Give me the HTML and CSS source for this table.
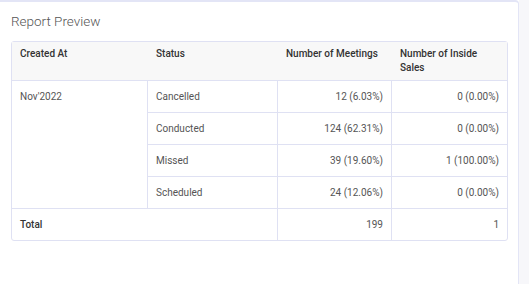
FILE: index.html
```html
<!DOCTYPE html>
<html>
<head>
<meta charset="utf-8">
<link rel="stylesheet" href="styles.css">
</head>
<body>
<div class="page">
  <div class="card">
    <h2 class="title">Report Preview</h2>
    <table class="report">
      <colgroup>
        <col class="c1"><col class="c2"><col class="c3"><col class="c4">
      </colgroup>
      <thead>
        <tr>
          <th>Created At</th>
          <th>Status</th>
          <th>Number of Meetings</th>
          <th class="last">Number of Inside Sales</th>
        </tr>
      </thead>
      <tbody>
        <tr>
          <td rowspan="4" class="date">Nov'2022</td>
          <td>Cancelled</td>
          <td class="num">12 (6.03%)</td>
          <td class="num last">0 (0.00%)</td>
        </tr>
        <tr>
          <td>Conducted</td>
          <td class="num">124 (62.31%)</td>
          <td class="num last">0 (0.00%)</td>
        </tr>
        <tr>
          <td>Missed</td>
          <td class="num">39 (19.60%)</td>
          <td class="num last">1 (100.00%)</td>
        </tr>
        <tr>
          <td>Scheduled</td>
          <td class="num">24 (12.06%)</td>
          <td class="num last">0 (0.00%)</td>
        </tr>
        <tr class="total">
          <td colspan="2" class="total-label">Total</td>
          <td class="num">199</td>
          <td class="num last">1</td>
        </tr>
      </tbody>
    </table>
  </div>
  <div class="strip"></div>
</div>
</body>
</html>
```
FILE: styles.css
```css
html, body {
  margin: 0;
  padding: 0;
  background: #ffffff;
  font-family: Roboto, "Liberation Sans", Arial, sans-serif;
}
.page {
  display: flex;
  height: 284px;
}
.card {
  width: 519px;
  box-sizing: border-box;
  border-top: 2px solid #e3e5f6;
  border-right: 1px solid #e3e5f6;
  border-top-right-radius: 4px;
  padding: 0 0 0 11px;
  background: #fff;
}
.strip {
  flex: 1;
  background: #f7f7fa;
}
.title {
  margin: 10px 0 11px 0;
  font-size: 13.5px;
  line-height: 18px;
  font-weight: 300;
  color: #555;
}
.report {
  border-collapse: separate;
  border-spacing: 0;
  table-layout: fixed;
  width: 495px;
  border: 1px solid #dfe1f3;
  border-radius: 3px;
  font-size: 10px;
}
.c1 { width: 136px; }
.c2 { width: 130px; }
.c3 { width: 114px; }
.c4 { width: 115px; }
.report th {
  background: #f8f8f8;
  color: #333;
  font-weight: 500;
  text-align: left;
  vertical-align: top;
  padding: 5px 8px 5px 8px;
  line-height: 14px;
  border-bottom: 1px solid #dfe1f3;
}
.report td {
  color: #555;
  padding: 8px 8px;
  line-height: 15px;
  vertical-align: top;
  border-bottom: 1px solid #dfe1f3;
  border-right: 1px solid #dfe1f3;
}
.report td.last { border-right: none; }
.report td.num { text-align: right; }
.report tr.total td { border-bottom: none; }
.report td.total-label {
  color: #333;
  font-weight: 500;
}
```
